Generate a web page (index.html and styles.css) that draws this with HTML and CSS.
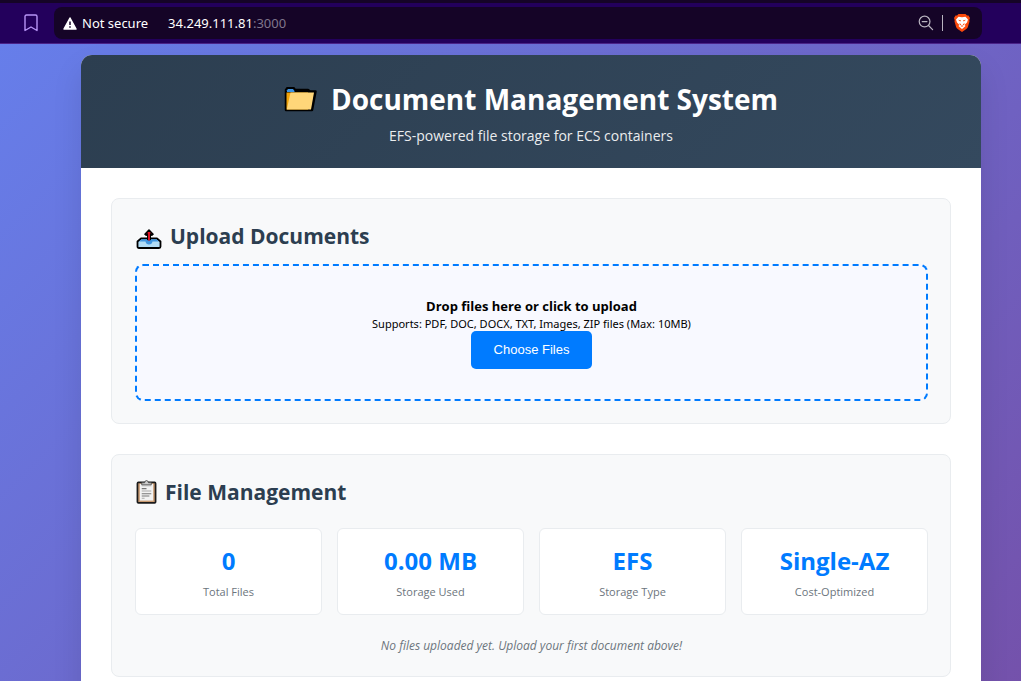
FILE: index.html
```html
<!DOCTYPE html>
<html lang="en">
<head>
  <meta charset="UTF-8" />
  <meta name="viewport" content="width=device-width, initial-scale=1.0" />
  <title>Document Management System</title>
  <link rel="stylesheet" href="styles.css">
</head>
<body>

<!-- Browser toolbar -->
<div class="toolbar">
  <button class="icon-btn" aria-label="Bookmark">
    <svg width="14" height="18" viewBox="0 0 14 18" fill="none" stroke="#b794f6" stroke-width="1.4" stroke-linejoin="round">
      <path d="M1 2.5Q1 1 2.500 1H11.500Q13 1 13 2.500V16.500L7 13L1 16.500Z"/>
    </svg>
  </button>
  <div class="address-bar">
    <svg class="warning" width="14" height="13" viewBox="0 0 14 13">
      <path d="M7 1L13 12H1Z" fill="#fff" stroke="#fff" stroke-width="1.500" stroke-linejoin="round"/>
      <path d="M7 4.500V8M7 9.300V10.800" stroke="#150427" stroke-width="1.500"/>
    </svg>
    <span class="secure">Not secure</span>
    <span class="url">34.249.111.81<span class="port">:3000</span></span>
    <button class="icon-btn" aria-label="Zoom">
      <svg width="16" height="16" viewBox="0 0 17 17" fill="none" stroke="#b9b4c0" stroke-width="1.300" stroke-linecap="round">
        <circle cx="7" cy="7" r="5.700"/>
        <path d="M4.500 7H9.500M11.200 11.200L15.500 15.500"/>
      </svg>
    </button>
    <span class="divider"></span>
    <button class="icon-btn" aria-label="Shields">
      <svg width="16" height="18" viewBox="0 0 16 18">
        <path d="M4.500 0H11.500L13 1.600L14.500 1.500L16 4L15.300 6L15.500 7.500L13.800 13.300Q13.300 14.500 12 15.300L8 18L4 15.300Q2.700 14.500 2.200 13.300L.5 7.500L.7 6L0 4L1.500 1.500L3 1.600Z" fill="#fb4a0c"/>
        <path d="M4.500 2.800L8 3.300L11.500 2.800L14 5.500L13 8.500L11 10.500L11.300 12.300L8 15L4.700 12.300L5 10.500L3 8.500L2 5.500Z" fill="#fff"/>
        <path d="M4 5.800L7 6.300L6.300 7.500ZM12 5.800L9 6.300L9.700 7.500ZM5.500 9L7.300 10.500L5.800 11.500ZM10.500 9L8.700 10.500L10.200 11.500ZM6.500 12L8 11.300L9.500 12L8 12.800Z" fill="#fb4a0c"/>
      </svg>
    </button>
  </div>
</div>

<div class="page">
  <div class="container">
    <div class="header">
      <h1>
        <svg width="33" height="25" viewBox="0 0 33 25">
          <path d="M2 23V3L3.500 1H9.500L11 3H24L26 4.500H31.500L28 23Z" fill="#000" stroke="#000" stroke-width="2.500" stroke-linejoin="round"/>
          <path d="M3 5V3.300L4 2H9L10.500 4V5Z" fill="#3f95e5"/>
          <path d="M2.500 5.500H24V22.500H2.500Z" fill="#f0a30a"/>
          <path d="M6.500 5.500H30L27 22.500H2.800Z" fill="#ffd679"/>
        </svg>
        Document Management System
      </h1>
      <p>EFS-powered file storage for ECS containers</p>
    </div>

    <div class="content">
      <!-- Upload -->
      <div class="section">
        <h2>
          <svg class="tray" width="26" height="20" viewBox="0 0 26 20">
            <path d="M5 9.500H21L24.500 12.500V17.500Q24.500 19 23 19H3Q1.500 19 1.500 17.500V12.500Z" fill="#b1dcf5" stroke="#000" stroke-width="1.800" stroke-linejoin="round"/>
            <path d="M5.500 10.300H20.500L22.800 12.500H16.500Q16 15.500 13 15.500T9.500 12.500H3.200Z" fill="#3f95e0"/>
            <path d="M13 1L17 5.200L15.800 6.200L14.200 5V10.500H11.800V5L10.200 6.200L9 5.200Z" fill="#e81224" stroke="#000" stroke-width="1.600" stroke-linejoin="round"/>
            <path d="M13 3V11.500" stroke="#e81224" stroke-width="1.800"/>
          </svg>
          Upload Documents
        </h2>
        <div class="upload-area" id="uploadArea">
          <strong>Drop files here or click to upload</strong>
          <small>Supports: PDF, DOC, DOCX, TXT, Images, ZIP files (Max: 10MB)</small>
          <input type="file" id="fileInput" aria-label="Files" multiple hidden />
          <button class="upload-btn" onclick="document.getElementById('fileInput').click()">Choose Files</button>
        </div>
      </div>

      <!-- Files -->
      <div class="section">
        <h2 class="files-title">
          <svg width="21" height="26" viewBox="0 0 22 26">
            <rect x="1.500" y="3" width="19" height="21.500" rx="1" fill="#c99a70" stroke="#1b1b1b" stroke-width="1.800"/>
            <rect x="4" y="4.500" width="14" height="17.500" fill="#f2f2f2"/>
            <path d="M6 5.500V3.300H9Q9.300 1 11 1T13 3.300H16V5.500Z" fill="#ccc" stroke="#555" stroke-width="1"/>
            <path d="M6 9.500H11M6 14.800H16M6 17.200H14" stroke="#777" stroke-width="1.200"/>
            <path d="M6 6.500H16M6 12H16M6 19.500H9" stroke="#aaa" stroke-width="1.200"/>
          </svg>
          File Management
        </h2>
        <div class="stats">
          <div class="stat-card">
            <div class="stat-number">0</div>
            <div class="stat-label">Total Files</div>
          </div>
          <div class="stat-card">
            <div class="stat-number">0.00 MB</div>
            <div class="stat-label">Storage Used</div>
          </div>
          <div class="stat-card">
            <div class="stat-number">EFS</div>
            <div class="stat-label">Storage Type</div>
          </div>
          <div class="stat-card">
            <div class="stat-number">Single-AZ</div>
            <div class="stat-label">Cost-Optimized</div>
          </div>
        </div>
        <p class="empty">No files uploaded yet. Upload your first document above!</p>
      </div>
    </div>
  </div>
</div>

</body>
</html>
```
FILE: styles.css
```css
* {
  box-sizing: border-box;
  margin: 0;
  padding: 0;
}
body {
  font-family: "Open Sans", "Noto Sans", sans-serif;
  height: 100vh;
  display: flex;
  flex-direction: column;
  overflow: hidden;
}
button {
  border: none;
  cursor: pointer;
}
svg {
  flex: none;
}
.toolbar {
  display: flex;
  align-items: center;
  gap: 16px;
  height: 44px;
  padding: 0 39px 0 24px;
  background-color: #23005c;
  border-top: 3px solid #150427;
  border-bottom: 1px solid #4a2388;
}
.icon-btn {
  display: flex;
  background: none;
}
.address-bar {
  flex: 1;
  display: flex;
  align-items: center;
  height: 32px;
  padding: 0 12px 0 9px;
  border-radius: 8px;
  background-color: #150427;
  color: #fff;
  font-family: "Noto Sans", sans-serif;
  font-size: 13px;
}
.secure {
  margin-left: 5px;
}
.url {
  flex: 1;
  margin-left: 20px;
}
.port {
  color: #80768c;
}
.divider {
  width: 1px;
  height: 16px;
  margin: 0 11px 0 8px;
  background-color: #b9b4c0;
}
.page {
  flex: 1;
  min-height: 0;
  padding: 11px 40px 0 81px;
  background: linear-gradient(135deg, #667eea 0%, #764ba2 100%);
  background-size: 105% 130%;
  overflow: hidden;
}
.container {
  max-width: 900px;
  margin: 0 auto;
  background-color: #fff;
  border-radius: 11px;
  box-shadow: 0 15px 30px rgba(0,0,0,0.1);
  overflow: hidden;
}
.header {
  padding: 22px;
  background: linear-gradient(135deg, #2c3e50, #34495e);
  color: #fff;
  text-align: center;
}
h1 {
  display: flex;
  justify-content: center;
  align-items: center;
  gap: 14px;
  font-size: 28px;
  line-height: 45px;
}
.header p {
  margin-top: 3px;
  font-size: 14px;
  line-height: 21px;
  opacity: 0.9;
}
.content {
  padding: 30px;
}
.section {
  margin-bottom: 30px;
  padding: 22px 22px 22px 23px;
  background-color: #f8f9fa;
  border: 1px solid #e9ecef;
  border-radius: 8px;
}
h2 {
  display: flex;
  align-items: center;
  gap: 8px;
  margin-bottom: 13px;
  padding-left: 1px;
  color: #2c3e50;
  font-size: 21px;
  line-height: 30px;
}
.tray {
  margin-top: 6px;
}
.files-title {
  margin-bottom: 21px;
}
.upload-area {
  display: flex;
  flex-direction: column;
  align-items: center;
  padding: 30px;
  border: 2px dashed #007bff;
  border-radius: 8px;
  background-color: #f8f9ff;
}
.upload-area strong {
  font-size: 13px;
  line-height: 20px;
}
.upload-area small {
  font-family: "Noto Sans", sans-serif;
  font-size: 11px;
  line-height: 15px;
}
.upload-btn {
  padding: 0 23px;
  border-radius: 5px;
  background-color: #007bff;
  color: #fff;
  font: 500 13px/38px "Liberation Sans", Arial, sans-serif;
}
.upload-btn:hover {
  background-color: #0056b3;
}
.stats {
  display: grid;
  grid-template-columns: repeat(4, 1fr);
  gap: 15px;
}
.stat-card {
  padding: 15px 15px 14px;
  background-color: #fff;
  border: 1px solid #e9ecef;
  border-radius: 6px;
  text-align: center;
}
.stat-number {
  color: #007bff;
  font-size: 24px;
  font-weight: bold;
  line-height: 34px;
}
.stat-label {
  margin-top: 5px;
  color: #6c757d;
  font-size: 11px;
  line-height: 17px;
}
.empty {
  margin-top: 22px;
  color: #6c757d;
  font-size: 12px;
  font-style: italic;
  line-height: 17px;
  text-align: center;
}
```
